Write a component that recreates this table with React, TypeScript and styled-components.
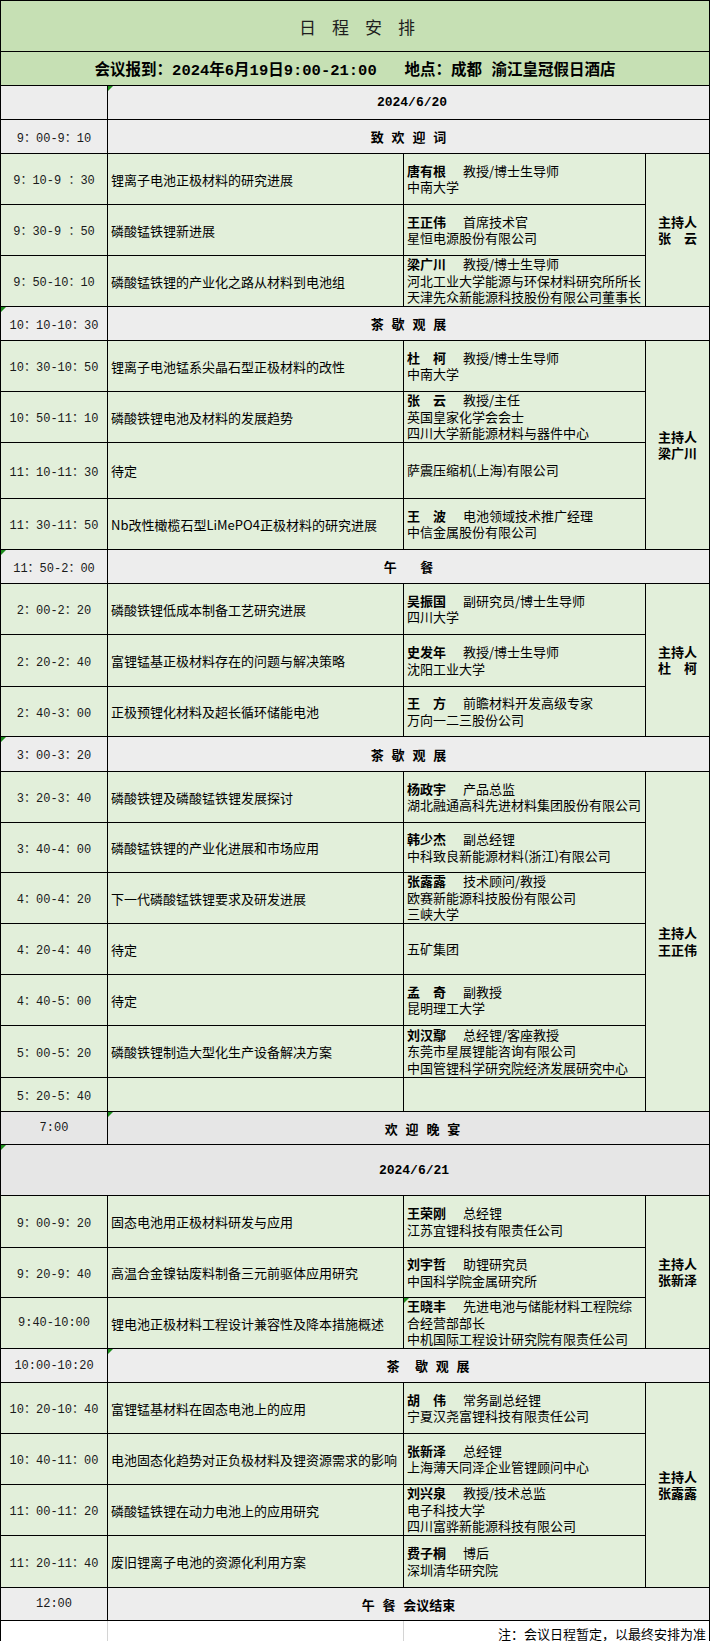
import styled, { createGlobalStyle, css } from "styled-components"

const cjk = `"Noto Sans CJK SC", "Noto Sans", sans-serif`
const mono = `"Liberation Mono", "Noto Sans CJK SC", monospace`

const Colors = {
    title: "#c6e0b4",
    talk: "#e2efda",
    pause: "#ededed",
    evening: "#e6e6e6",
    flag: "#1c8c1c",
    grid: "#d4d4d4"
}

type Talk = {
    time: string
    h: number
    topic?: string
    name?: string
    role?: string
    lines?: string[]
    flag?: boolean
}

type Row =
    | { type: "banner"; time: string; label: string; h: number; bg?: string; timeFlag?: boolean; labelFlag?: boolean; indent?: number }
    | { type: "date"; label: string; h: number; full?: boolean; bg?: string; indent?: number }
    | { type: "group"; host: string; talks: Talk[] }

const rows: Row[] = [
    { type: "date", label: "2024/6/20", h: 34, indent: 7 },
    { type: "banner", time: "9：00-9：10", label: "致 欢 迎 词", h: 34 },
    {
        type: "group",
        host: "张　云",
        talks: [
            { time: "9：10-9 ：30", h: 51, topic: "锂离子电池正极材料的研究进展", name: "唐有根", role: "教授/博士生导师", lines: ["中南大学"] },
            { time: "9：30-9 ：50", h: 51, topic: "磷酸锰铁锂新进展", name: "王正伟", role: "首席技术官", lines: ["星恒电源股份有限公司"] },
            {
                time: "9：50-10：10",
                h: 51,
                topic: "磷酸锰铁锂的产业化之路从材料到电池组",
                name: "梁广川",
                role: "教授/博士生导师",
                lines: ["河北工业大学能源与环保材料研究所所长", "天津先众新能源科技股份有限公司董事长"]
            }
        ]
    },
    { type: "banner", time: "10：10-10：30", label: "茶 歇 观 展", h: 34, timeFlag: true },
    {
        type: "group",
        host: "梁广川",
        talks: [
            { time: "10：30-10：50", h: 51, topic: "锂离子电池锰系尖晶石型正极材料的改性", name: "杜　柯", role: "教授/博士生导师", lines: ["中南大学"] },
            {
                time: "10：50-11：10",
                h: 51,
                topic: "磷酸铁锂电池及材料的发展趋势",
                name: "张　云",
                role: "教授/主任",
                lines: ["英国皇家化学会会士", "四川大学新能源材料与器件中心"]
            },
            { time: "11：10-11：30", h: 56, topic: "待定", lines: ["萨震压缩机(上海)有限公司"] },
            {
                time: "11：30-11：50",
                h: 51,
                topic: "Nb改性橄榄石型LiMePO4正极材料的研究进展",
                name: "王　波",
                role: "电池领域技术推广经理",
                lines: ["中信金属股份有限公司"]
            }
        ]
    },
    { type: "banner", time: "11：50-2：00", label: "午   餐", h: 34, timeFlag: true },
    {
        type: "group",
        host: "杜　柯",
        talks: [
            { time: "2：00-2：20", h: 51, topic: "磷酸铁锂低成本制备工艺研究进展", name: "吴振国", role: "副研究员/博士生导师", lines: ["四川大学"] },
            { time: "2：20-2：40", h: 52, topic: "富锂锰基正极材料存在的问题与解决策略", name: "史发年", role: "教授/博士生导师", lines: ["沈阳工业大学"] },
            { time: "2：40-3：00", h: 50, topic: "正极预锂化材料及超长循环储能电池", name: "王　方", role: "前瞻材料开发高级专家", lines: ["万向一二三股份公司"] }
        ]
    },
    { type: "banner", time: "3：00-3：20", label: "茶 歇 观 展", h: 35, timeFlag: true },
    {
        type: "group",
        host: "王正伟",
        talks: [
            { time: "3：20-3：40", h: 51, topic: "磷酸铁锂及磷酸锰铁锂发展探讨", name: "杨政宇", role: "产品总监", lines: ["湖北融通高科先进材料集团股份有限公司"] },
            { time: "3：40-4：00", h: 50, topic: "磷酸锰铁锂的产业化进展和市场应用", name: "韩少杰", role: "副总经锂", lines: ["中科致良新能源材料(浙江)有限公司"] },
            {
                time: "4：00-4：20",
                h: 51,
                topic: "下一代磷酸锰铁锂要求及研发进展",
                name: "张露露",
                role: "技术顾问/教授",
                lines: ["欧赛新能源科技股份有限公司", "三峡大学"]
            },
            { time: "4：20-4：40", h: 51, topic: "待定", lines: ["五矿集团"] },
            { time: "4：40-5：00", h: 51, topic: "待定", name: "孟　奇", role: "副教授", lines: ["昆明理工大学"] },
            {
                time: "5：00-5：20",
                h: 52,
                topic: "磷酸铁锂制造大型化生产设备解决方案",
                name: "刘汉鄢",
                role: "总经锂/客座教授",
                lines: ["东莞市星展锂能咨询有限公司", "中国管锂科学研究院经济发展研究中心"]
            },
            { time: "5：20-5：40", h: 34 }
        ]
    },
    { type: "banner", time: "7:00", label: "欢 迎 晚 宴", h: 33, bg: Colors.evening, labelFlag: true, indent: 28 },
    { type: "date", label: "2024/6/21", h: 51, full: true, bg: Colors.evening, indent: 118 },
    {
        type: "group",
        host: "张新泽",
        talks: [
            { time: "9：00-9：20", h: 52, topic: "固态电池用正极材料研发与应用", name: "王荣刚", role: "总经锂", lines: ["江苏宜锂科技有限责任公司"] },
            { time: "9：20-9：40", h: 50, topic: "高温合金镍钴废料制备三元前驱体应用研究", name: "刘宇哲", role: "助锂研究员", lines: ["中国科学院金属研究所"] },
            {
                time: "9:40-10:00",
                h: 51,
                topic: "锂电池正极材料工程设计兼容性及降本措施概述",
                name: "王晓丰",
                role: "先进电池与储能材料工程院综",
                lines: ["合经营部部长", "中机国际工程设计研究院有限责任公司"],
                flag: true
            }
        ]
    },
    { type: "banner", time: "10:00-10:20", label: "茶  歇 观 展", h: 34, labelFlag: true, indent: 39 },
    {
        type: "group",
        host: "张露露",
        talks: [
            { time: "10：20-10：40", h: 51, topic: "富锂锰基材料在固态电池上的应用", name: "胡　伟", role: "常务副总经锂", lines: ["宁夏汉尧富锂科技有限责任公司"] },
            { time: "10：40-11：00", h: 51, topic: "电池固态化趋势对正负极材料及锂资源需求的影响", name: "张新泽", role: "总经锂", lines: ["上海薄天同泽企业管锂顾问中心"] },
            {
                time: "11：00-11：20",
                h: 51,
                topic: "磷酸锰铁锂在动力电池上的应用研究",
                name: "刘兴泉",
                role: "教授/技术总监",
                lines: ["电子科技大学", "四川富骅新能源科技有限公司"]
            },
            { time: "11：20-11：40", h: 52, topic: "废旧锂离子电池的资源化利用方案", name: "费子桐", role: "博后", lines: ["深圳清华研究院"] }
        ]
    },
    { type: "banner", time: "12:00", label: "午 餐 会议结束", h: 33 }
]

export default function App() {
    return (
        <>
            <GlobalStyle />
            <Sheet>
                <TitleCell>日程安排</TitleCell>
                <InfoCell>会议报到：2024年6月19日9:00-21:00   地点：成都 渝江皇冠假日酒店</InfoCell>
                {rows.map((row, i) => {
                    if (row.type === "date") {
                        if (row.full) {
                            return (
                                <DateCell key={i} $h={row.h} $bg={row.bg} $full $flag $indent={row.indent}>
                                    {row.label}
                                </DateCell>
                            )
                        }
                        return [
                            <TimeCell key={`${i}-t`} $h={row.h} $bg={row.bg ?? Colors.pause} />,
                            <DateCell key={`${i}-d`} $h={row.h} $bg={row.bg} $flag $indent={row.indent}>
                                {row.label}
                            </DateCell>
                        ]
                    }

                    if (row.type === "banner") {
                        const bg = row.bg ?? Colors.pause
                        return [
                            <TimeCell key={`${i}-t`} $h={row.h} $bg={bg} $flag={row.timeFlag}>
                                {row.time}
                            </TimeCell>,
                            <BannerCell key={`${i}-b`} $h={row.h} $bg={bg} $flag={row.labelFlag} $indent={row.indent}>
                                {row.label}
                            </BannerCell>
                        ]
                    }

                    return row.talks.map((talk, j) => [
                        <TimeCell key={`${i}-${j}-t`} $h={talk.h}>
                            {talk.time}
                        </TimeCell>,
                        <TopicCell key={`${i}-${j}-p`} $h={talk.h}>
                            {talk.topic}
                        </TopicCell>,
                        <SpeakerCell key={`${i}-${j}-s`} $h={talk.h} $flag={talk.flag}>
                            {talk.name && (
                                <SpeakerLine>
                                    <Name>{talk.name}</Name>
                                    <Role>{talk.role}</Role>
                                </SpeakerLine>
                            )}
                            {talk.lines?.map(line => (
                                <SpeakerLine key={line}>{line}</SpeakerLine>
                            ))}
                        </SpeakerCell>,
                        j === 0 && (
                            <HostCell key={`${i}-h`} $span={row.talks.length}>
                                <HostLine>主持人</HostLine>
                                <HostLine>{row.host}</HostLine>
                            </HostCell>
                        )
                    ])
                })}
                <NoteCell />
                <NoteCell />
                <NoteText>注：会议日程暂定，以最终安排为准</NoteText>
            </Sheet>
        </>
    )
}

const GlobalStyle = createGlobalStyle`
    html, body {
        margin: 0;
        padding: 0;
        background: #ffffff;
    }

    body {
        font-family: ${cjk};
        color: #000000;
    }
`

const Sheet = styled.div`
    display: grid;
    grid-template-columns: 107px 296px 242px 64px;
    width: 710px;
    border-top: 1px solid #000;
    border-left: 1px solid #000;
    box-sizing: border-box;
`

const Cell = styled.div<{ $h?: number; $bg?: string; $flag?: boolean }>`
    position: relative;
    box-sizing: border-box;
    height: ${p => (p.$h ? `${p.$h}px` : "auto")};
    display: flex;
    align-items: center;
    white-space: nowrap;
    background: ${p => p.$bg ?? Colors.talk};
    border-right: 1px solid #000;
    border-bottom: 1px solid #000;
    font-family: ${cjk};
    font-size: 13px;
    color: #000;

    ${p =>
        p.$flag &&
        css`
            &::before {
                content: "";
                position: absolute;
                top: 0;
                left: 0;
                border-top: 5px solid ${Colors.flag};
                border-right: 5px solid transparent;
            }
        `}
`

const TitleCell = styled(Cell)`
    grid-column: 1 / -1;
    height: 51px;
    justify-content: center;
    padding-left: 20px;
    background: ${Colors.title};
    font-size: 17px;
    letter-spacing: 16px;
    color: #1e1e1e;
`

const InfoCell = styled(Cell)`
    grid-column: 1 / -1;
    height: 34px;
    justify-content: center;
    background: ${Colors.title};
    font-family: ${mono};
    font-size: 15.5px;
    font-weight: 700;
    white-space: pre;
`

const TimeCell = styled(Cell)`
    justify-content: center;
    font-family: ${mono};
    font-size: 12px;
    white-space: pre;
    color: #1a1a1a;
`

const BannerCell = styled(Cell)<{ $indent?: number }>`
    grid-column: span 3;
    justify-content: center;
    padding-left: ${p => p.$indent ?? 0}px;
    font-family: ${mono};
    font-weight: 700;
    white-space: pre;
`

const DateCell = styled(Cell)<{ $full?: boolean; $indent?: number }>`
    grid-column: ${p => (p.$full ? "1 / -1" : "span 3")};
    justify-content: center;
    padding-left: ${p => p.$indent ?? 0}px;
    background: ${p => p.$bg ?? Colors.pause};
    font-family: ${mono};
    font-weight: 700;
`

const TopicCell = styled(Cell)`
    padding-left: 3px;
`

const SpeakerCell = styled(Cell)`
    flex-direction: column;
    align-items: flex-start;
    justify-content: center;
    padding-left: 3px;
    line-height: 16.5px;
`

const SpeakerLine = styled.div`
    display: flex;
    align-items: baseline;
`

const Name = styled.span`
    font-weight: 700;
`

const Role = styled.span`
    margin-left: 17px;
`

const HostCell = styled(Cell)<{ $span: number }>`
    grid-row: span ${p => p.$span};
    flex-direction: column;
    justify-content: center;
    font-weight: 700;
`

const HostLine = styled.div`
    font-size: 13px;
    line-height: 16.5px;
`

const NoteCell = styled.div`
    height: 24px;
    background: #ffffff;
    border-right: 1px solid ${Colors.grid};
`

const NoteText = styled.div`
    grid-column: span 2;
    height: 24px;
    box-sizing: border-box;
    display: flex;
    align-items: center;
    justify-content: flex-end;
    padding-right: 3px;
    background: #ffffff;
    border-right: 1px solid #000;
    font-family: ${mono};
    font-size: 13px;
`
